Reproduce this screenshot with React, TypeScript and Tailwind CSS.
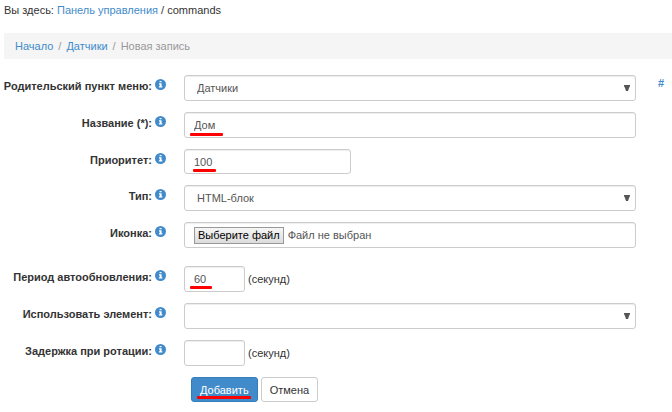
import React from 'react';

type FieldRowProps = {
  id: string;
  label: string;
  children: React.ReactNode;
};

function InfoIcon() {
  return (
    <svg width="11" height="11" viewBox="0 0 11 11" className="shrink-0" aria-hidden="true">
      <circle cx="5.5" cy="5.5" r="5.5" fill="#428bca" />
      <path d="M4.6 2h1.9v1.3H4.6zM4 4.3h2.6v2.9h.7v1.3H3.9V7.2h.8V5.5H4z" fill="#fff" />
    </svg>
  );
}

function FieldRow({ id, label, children }: FieldRowProps) {
  return (
    <div className="flex items-start gap-[18px]">
      <div className="flex w-[162px] shrink-0 items-start justify-end gap-[3px] pt-[3px]">
        <label htmlFor={id} className="font-bold whitespace-nowrap">{label}</label>
        <span className="pt-px"><InfoIcon /></span>
      </div>
      <div className="flex min-w-0 flex-1 items-center gap-[3px]">{children}</div>
    </div>
  );
}

const boxClass = 'rounded-[3px] border border-[#ccc] bg-white text-[#555] shadow-[inset_0_1px_1px_rgba(0,0,0,0.075)] outline-none';
const markClass = 'absolute h-[3px] rounded-[1px] bg-[#f00]';

function SelectField({ id, options }: { id: string; options: string[] }) {
  return (
    <div className="relative w-full">
      <select id={id} className={`block h-[26px] w-full appearance-none px-3 ${boxClass}`}>
        {options.map(o => <option key={o}>{o}</option>)}
      </select>
      <svg width="6" height="6" viewBox="0 0 6 6" className="pointer-events-none absolute top-[10px] right-[6px]" aria-hidden="true">
        <path d="M0 0h6v1L5 3 4 6H2L1 3 0 1z" fill="#555" />
      </svg>
    </div>
  );
}

export default function App() {
  return (
    <div className="bg-white pl-1 font-['Liberation_Sans',Arial,sans-serif] text-[11px] leading-4 text-[#333]">
      <div className="pt-[2px]">
        Вы здесь: <a href="#panel" className="text-[#428bca]">Панель управления</a> / commands
      </div>

      <nav className="mt-[15px] flex items-center gap-[5px] bg-[#f5f5f5] px-[11px] py-[5px] text-[#999]">
        <a href="#home" className="text-[#428bca]">Начало</a>
        <span>/</span>
        <a href="#sensors" className="text-[#428bca]">Датчики</a>
        <span>/</span>
        <span>Новая запись</span>
      </nav>

      <div className="flex pt-4">
        <form className="flex min-w-0 flex-1 flex-col gap-[11px]" onSubmit={e => e.preventDefault()}>
          <FieldRow id="parent" label="Родительский пункт меню:">
            <SelectField id="parent" options={['Датчики']} />
          </FieldRow>

          <FieldRow id="title" label="Название (*):">
            <div className="relative w-full">
              <input id="title" type="text" defaultValue="Дом" className={`block h-[26px] w-full px-[9px] ${boxClass}`} />
              <span className={`top-[21px] left-[6px] w-[33px] ${markClass}`} />
            </div>
          </FieldRow>

          <FieldRow id="priority" label="Приоритет:">
            <div className="relative w-[167px]">
              <input id="priority" type="text" defaultValue="100" className={`block h-[25px] w-full px-[9px] ${boxClass}`} />
              <span className={`top-[20px] left-[9px] w-[23px] ${markClass}`} />
            </div>
          </FieldRow>

          <FieldRow id="type" label="Тип:">
            <SelectField id="type" options={['HTML-блок']} />
          </FieldRow>

          <FieldRow id="icon" label="Иконка:">
            <div className={`relative flex h-[26px] w-full items-center gap-1 px-[9px] ${boxClass}`}>
              <input id="icon" type="file" className="sr-only" />
              <label htmlFor="icon" className="border border-[#999] bg-linear-to-b from-[#f6f6f6] to-[#dcdcdc] px-[3px] leading-[15px] text-black">
                Выберите файл
              </label>
              <span>Файл не выбран</span>
            </div>
          </FieldRow>

          <div className="-mb-[11px] h-[7px]" />

          <FieldRow id="refresh" label="Период автообновления:">
            <div className="relative w-[61px]">
              <input id="refresh" type="text" defaultValue="60" className={`block h-[26px] w-full px-[9px] ${boxClass}`} />
              <span className={`top-[20px] left-[6px] w-[22px] ${markClass}`} />
            </div>
            <span>(секунд)</span>
          </FieldRow>

          <FieldRow id="element" label="Использовать элемент:">
            <SelectField id="element" options={['']} />
          </FieldRow>

          <FieldRow id="delay" label="Задержка при ротации:">
            <input id="delay" type="text" className={`h-[26px] w-[61px] px-[9px] ${boxClass}`} />
            <span>(секунд)</span>
          </FieldRow>

          <div className="flex gap-[3px] pl-[187px]">
            <button type="submit" className="relative h-[25px] rounded-[3px] border border-[#357ebd] bg-[#428bca] px-2 text-white">
              Добавить
              <span className={`top-[18px] left-[5px] w-[54px] ${markClass}`} />
            </button>
            <button type="button" className="h-[25px] rounded-[3px] border border-[#ccc] bg-white px-2">Отмена</button>
          </div>
        </form>

        <div className="w-9 shrink-0 pl-[22px]">
          <a href="#link" className="font-bold text-[#428bca]">#</a>
        </div>
      </div>
    </div>
  );
}
